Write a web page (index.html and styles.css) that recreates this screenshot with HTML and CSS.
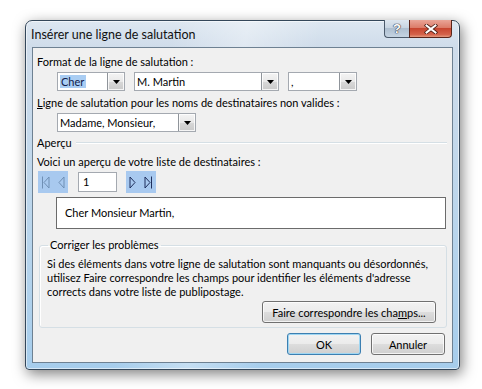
FILE: index.html
```html
<!DOCTYPE html>
<html lang="fr">
<head>
<meta charset="utf-8">
<title>Insérer une ligne de salutation</title>
<link rel="stylesheet" href="styles.css">
</head>
<body>
<div class="window">
  <div class="titlebar">
    <span class="title">Insérer une ligne de salutation</span>
    <div class="caption-btns">
      <span class="cbtn help">?</span>
      <span class="cbtn close">
        <svg width="14" height="10" viewBox="0 0 14 10"><path d="M2.5 1.5 L11.5 8.5 M11.5 1.5 L2.5 8.5" stroke="#4a1d14" stroke-width="3.6" stroke-linecap="square"/><path d="M2.5 1.5 L11.5 8.5 M11.5 1.5 L2.5 8.5" stroke="#ffffff" stroke-width="2" stroke-linecap="square"/></svg>
      </span>
    </div>
  </div>
  <div class="client">
    <div class="label row-format">Format de la ligne de salutation :</div>
    <div class="combo-row">
      <div class="combo w-cher"><span class="field"><span class="sel">Cher</span></span><span class="dd"><svg width="7" height="4" viewBox="0 0 7 4"><path d="M0 0 H7 L3.5 4 Z" fill="#000"/></svg></span></div>
      <div class="combo w-name"><span class="field">M. Martin</span><span class="dd"><svg width="7" height="4" viewBox="0 0 7 4"><path d="M0 0 H7 L3.5 4 Z" fill="#000"/></svg></span></div>
      <div class="combo w-punct"><span class="field">,</span><span class="dd"><svg width="7" height="4" viewBox="0 0 7 4"><path d="M0 0 H7 L3.5 4 Z" fill="#000"/></svg></span></div>
    </div>
    <div class="label row-invalid"><u>L</u>igne de salutation pour les noms de destinataires non valides :</div>
    <div class="combo-row row-madame">
      <div class="combo w-madame"><span class="field">Madame, Monsieur,</span><span class="dd"><svg width="7" height="4" viewBox="0 0 7 4"><path d="M0 0 H7 L3.5 4 Z" fill="#000"/></svg></span></div>
    </div>
    <div class="section-head"><span>Aperçu</span><span class="rule"></span></div>
    <div class="label row-voici">Voici un aperçu de votre liste de destinataires :</div>
    <div class="nav">
      <div class="navpair disabled">
        <svg width="9" height="13" viewBox="0 0 9 13"><path d="M1.5 0.5 V12.5 M8 1 L3 6.5 L8 12 Z" fill="none" stroke="#6f8fb4" stroke-width="1"/></svg>
        <svg width="7" height="13" viewBox="0 0 7 13"><path d="M6 1 L1 6.5 L6 12 Z" fill="none" stroke="#6f8fb4" stroke-width="1"/></svg>
      </div>
      <div class="recnum">1</div>
      <div class="navpair">
        <svg width="7" height="13" viewBox="0 0 7 13"><path d="M1 1 L6 6.5 L1 12 Z" fill="none" stroke="#1f2f5c" stroke-width="1"/></svg>
        <svg width="9" height="13" viewBox="0 0 9 13"><path d="M7.5 0.5 V12.5 M1 1 L6 6.5 L1 12 Z" fill="none" stroke="#1f2f5c" stroke-width="1"/></svg>
      </div>
    </div>
    <div class="preview">Cher Monsieur Martin,</div>
    <fieldset class="group">
      <legend>Corriger les problèmes</legend>
      <p class="help-text">Si des éléments dans votre ligne de salutation sont manquants ou désordonnés,<br>utilisez Faire correspondre les champs pour identifier les éléments d'adresse<br>corrects dans votre liste de publipostage.</p>
      <div class="group-actions"><button class="btn btn-match">Faire correspondre les cha<u>m</u>ps...</button></div>
    </fieldset>
    <div class="footer">
      <button class="btn btn-std default">OK</button>
      <button class="btn btn-std">Annuler</button>
    </div>
  </div>
</div>
</body>
</html>
```
FILE: styles.css
```css
* { box-sizing: border-box; }
html, body { margin: 0; padding: 0; background: #ffffff; }
body {
  font-family: "Lato", "Liberation Sans", sans-serif;
  font-size: 11px;
  color: #000;
  width: 482px;
  height: 389px;
  overflow: hidden;
}

.window {
  margin: 20px 0 0 25px;
  width: 435px;
  height: 350px;
  border: 1px solid #34475a;
  border-radius: 7px 7px 4px 4px;
  padding: 0 6px 6px 6px;
  background:
    linear-gradient(100deg, rgba(255,255,255,0) 30%, rgba(255,255,255,0.35) 45%, rgba(255,255,255,0) 60%),
    linear-gradient(to bottom, #dde7f1 0, #cfdcea 26px, #b9d5ec 60%, #a6cdec 100%);
  box-shadow: 2px 4px 14px rgba(0,0,0,0.5), inset 0 0 0 1px rgba(255,255,255,0.55);
  display: flex;
  flex-direction: column;
}

.titlebar {
  height: 26px;
  display: flex;
  align-items: flex-start;
}
.title {
  flex: 1;
  margin-left: -1px;
  padding-top: 6px;
  font-size: 12.5px;
  color: #111;
}
.caption-btns {
  display: flex;
  margin-top: -1px;
  margin-right: 1px;
}
.cbtn {
  height: 18px;
  display: flex;
  align-items: center;
  justify-content: center;
  border: 1px solid #4b5a6b;
  border-top: none;
}
.help {
  width: 25px;
  border-right: none;
  border-radius: 0 0 0 4px;
  background: linear-gradient(to bottom, #dde6ef 0, #c8d5e2 45%, #aebfd0 50%, #c5d4e2 100%);
  color: #fff;
  font: bold 13px "Liberation Sans", sans-serif;
  text-shadow: 0 0 1px #334, 0 0 1px #334, 0 0 1px #334;
}
.close {
  width: 43px;
  border-color: #5a2419;
  border-radius: 0 0 4px 0;
  background: linear-gradient(to bottom, #eaa597 0, #dc7c69 45%, #c84630 50%, #d4624a 85%, #e59a7f 100%);
}

.client {
  height: 316px;
  border: 1px solid #6e8192;
  background: #f0f0f0;
  padding: 0 0 0 4px;
  display: flex;
  flex-direction: column;
}

.label { line-height: 14px; height: 14px; white-space: nowrap; }
.row-format { margin-top: 7px; }
.row-invalid { margin-top: 5px; }
.row-voici { margin-top: 5px; }

.combo-row { display: flex; gap: 9px; margin-top: 3px; padding-left: 20px; }
.combo {
  height: 19px;
  display: flex;
  border: 1px solid #a4a9b0;
  background: #fff;
}
.combo .field {
  flex: 1;
  padding-left: 2px;
  line-height: 17px;
  white-space: nowrap;
  overflow: hidden;
}
.combo .sel {
  display: inline-block;
  background: #a9cdf3;
  color: #10204a;
  line-height: 13px;
  padding: 0 2px 0 1px;
  margin-top: 2px;
  vertical-align: top;
}
.dd {
  width: 17px;
  border-left: 1px solid #8f949a;
  background: linear-gradient(to bottom, #f4f4f4 0, #e8e8e8 50%, #d8d8d8 51%, #cacaca 100%);
  box-shadow: inset 0 0 0 1px rgba(255,255,255,0.8);
  display: flex;
  align-items: center;
  justify-content: center;
}
.dd svg { display: block; margin-top: 1px; }
.w-cher { width: 68px; }
.w-name { width: 145px; }
.w-punct { width: 69px; }
.w-madame { width: 139px; }

.section-head {
  margin-top: 4px;
  height: 14px;
  line-height: 14px;
  display: flex;
  align-items: center;
  gap: 4px;
  padding-right: 5px;
}
.section-head .rule {
  flex: 1;
  height: 2px;
  border-top: 1px solid #d5dfe5;
  border-bottom: 1px solid #ffffff;
  margin-top: -1px;
}

.nav {
  margin-top: 2px;
  height: 22px;
  display: flex;
  align-items: center;
  padding-left: 1px;
}
.navpair {
  width: 30px;
  height: 22px;
  background: #a8c9ef;
  display: flex;
  align-items: center;
  justify-content: center;
  gap: 8px;
}
.recnum {
  width: 39px;
  height: 20px;
  margin: 0 9px 0 10px;
  background: #fff;
  border: 1px solid #a4a9b0;
  line-height: 18px;
  padding-left: 4px;
}

.preview {
  margin: 4px 0 0 19px;
  width: 390px;
  height: 32px;
  background: #fff;
  border: 1px solid #6b6b6b;
  line-height: 30px;
  padding-left: 8px;
}

.group {
  margin: 9px 5px 0 2px;
  padding: 0 10px 4px 7px;
  border: 1px solid #d5dfe5;
  border-radius: 3px;
  box-shadow: inset 1px 1px 0 #fff;
  min-width: 0;
}
.group legend {
  padding: 0 2px;
  margin-left: 1px;
  line-height: 14px;
}
.help-text {
  margin: 5px 0 0 0;
  line-height: 14px;
  white-space: nowrap;
}
.group-actions {
  display: flex;
  justify-content: flex-end;
  margin-top: 2px;
}

.btn {
  font: inherit;
  color: #000;
  height: 22px;
  padding: 0;
  border: 1px solid #707070;
  border-radius: 3px;
  background: linear-gradient(to bottom, #f2f2f2 0, #ebebeb 50%, #dddddd 51%, #cfcfcf 100%);
  box-shadow: inset 0 0 0 1px rgba(255,255,255,0.75);
  white-space: nowrap;
}
.btn-match { width: 174px; }
.btn-std { width: 74px; }
.btn.default {
  border-color: #3c7fb1;
  box-shadow: inset 0 0 0 1px #9fd6f2;
}
.footer {
  margin-top: 5px;
  display: flex;
  justify-content: flex-end;
  gap: 10px;
  padding-right: 7px;
}
```
